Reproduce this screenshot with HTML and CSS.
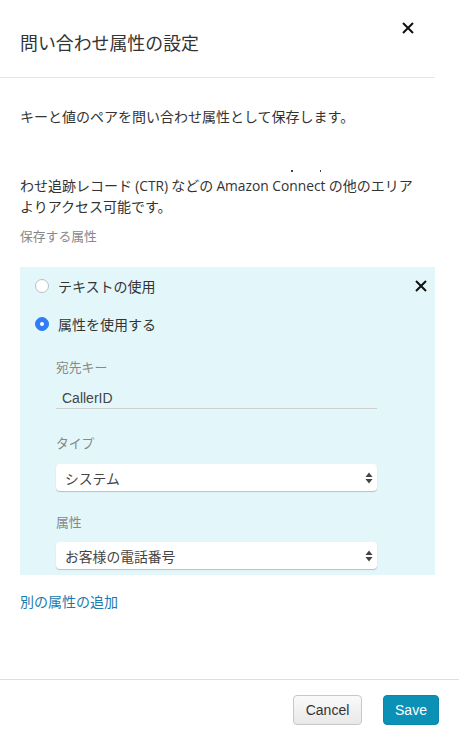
FILE: index.html
```html
<!DOCTYPE html>
<html lang="ja">
<head>
<meta charset="utf-8">
<title>問い合わせ属性の設定</title>
<link rel="stylesheet" href="styles.css">
</head>
<body>
<div class="modal">
  <header class="header">
    <h1 class="title">問い合わせ属性の設定</h1>
    <button class="close" aria-label="close">
      <svg width="12" height="12" viewBox="0 0 12 12"><path d="M1 1L11 11M11 1L1 11" stroke="#111" stroke-width="2" fill="none"/></svg>
    </button>
  </header>
  <div class="body">
    <p class="desc first">キーと値のペアを問い合わせ属性として保存します。</p>
    <p class="desc second"><span class="dots"><span class="dot"></span><span class="dot dot2"></span></span>わせ追跡レコード <span class="latin">(CTR)</span> などの <span class="latin">Amazon Connect</span> の他のエリア<br>よりアクセス可能です。</p>
    <div class="section-label">保存する属性</div>
    <div class="attr-box">
      <button class="close box-close" aria-label="remove">
        <svg width="12" height="12" viewBox="0 0 12 12"><path d="M1 1L11 11M11 1L1 11" stroke="#111" stroke-width="2" fill="none"/></svg>
      </button>
      <div class="radio-row"><span class="radio"></span><span>テキストの使用</span></div>
      <div class="radio-row second-radio"><span class="radio checked"></span><span>属性を使用する</span></div>
      <div class="fields">
        <div class="field-label key-label">宛先キー</div>
        <div class="text-input">CallerID</div>
        <div class="field-label type-label">タイプ</div>
        <div class="select"><span>システム</span>
          <svg width="8" height="12" viewBox="0 0 8 12"><path d="M4 0.5L7.5 5H0.5Z" fill="#444"/><path d="M4 11.5L7.5 7H0.5Z" fill="#444"/></svg>
        </div>
        <div class="field-label attr-label">属性</div>
        <div class="select attr-select"><span>お客様の電話番号</span>
          <svg width="8" height="12" viewBox="0 0 8 12"><path d="M4 0.5L7.5 5H0.5Z" fill="#444"/><path d="M4 11.5L7.5 7H0.5Z" fill="#444"/></svg>
        </div>
      </div>
    </div>
    <a class="add-link" href="#">別の属性の追加</a>
  </div>
  <footer class="footer">
    <button class="btn cancel">Cancel</button>
    <button class="btn save">Save</button>
  </footer>
</div>
</body>
</html>
```
FILE: styles.css
```css
* { box-sizing: border-box; }
html, body { margin: 0; padding: 0; background: #fff; }
body {
  font-family: "Noto Sans CJK JP", "Open Sans", sans-serif;
  color: #333;
  width: 459px;
  height: 745px;
  overflow: hidden;
}
.modal { width: 459px; }
.header {
  width: 435px;
  height: 78px;
  border-bottom: 1px solid #e6e6e6;
  display: flex;
  justify-content: space-between;
  align-items: flex-start;
}
.title {
  margin: 30px 0 0 20px;
  font-size: 17.9px;
  line-height: 24px;
  font-weight: normal;
  color: #333;
}
.close {
  background: none;
  border: 0;
  padding: 0;
  width: 12px;
  height: 12px;
  display: block;
  cursor: pointer;
}
.header .close { margin: 22px 21px 0 0; }
.body { padding: 0 20px; }
.desc {
  margin: 0;
  font-size: 14px;
  line-height: 21px;
  color: #333;
}
.desc.first { margin-top: 28px; }
.desc.second { margin-top: 27px; }
.latin { font-family: "Open Sans", "Noto Sans CJK JP", sans-serif; font-size: 13.8px; }
.dots { display: flex; height: 21px; align-items: flex-start; }
.dot { display: block; width: 1.5px; height: 1.5px; background: #444; margin: 16px 0 0 271px; }
.dot2 { margin-left: 27px; }
.section-label {
  margin-top: 9px;
  font-size: 12.8px;
  line-height: 20px;
  color: #888;
}
.attr-box {
  position: relative;
  margin-top: 21px;
  width: 415px;
  background: #e3f7fa;
  padding: 9px 0 6px 15px;
}
.box-close { position: absolute; top: 13px; right: 8px; }
.radio-row {
  display: flex;
  align-items: center;
  height: 20px;
  font-size: 14px;
  color: #333;
}
.second-radio { margin-top: 18px; }
.radio {
  width: 14px;
  height: 14px;
  border-radius: 50%;
  border: 1px solid #bdbdbd;
  background: #fff;
  margin-right: 9px;
  position: relative;
}
.radio.checked {
  background: #2f7ef5;
  border-color: #2f7ef5;
}
.radio.checked::after {
  content: "";
  position: absolute;
  left: 4px;
  top: 4px;
  width: 4px;
  height: 4px;
  border-radius: 50%;
  background: #fff;
}
.fields { padding-left: 21px; width: 342px; }
.field-label {
  font-size: 12.8px;
  line-height: 20px;
  color: #888;
}
.key-label { margin-top: 23px; }
.text-input {
  margin-top: 11px;
  height: 21px;
  border-bottom: 1px solid #cfcfcf;
  padding-left: 6px;
  font-family: "Liberation Sans", Arial, sans-serif;
  font-size: 14px;
  line-height: 20px;
  color: #444;
}
.type-label { margin-top: 24px; }
.select {
  margin-top: 11px;
  height: 27px;
  background: #fff;
  border-radius: 4px;
  box-shadow: 0 1px 1px rgba(0,0,0,0.22);
  display: flex;
  align-items: center;
  justify-content: space-between;
  padding: 0 4px 0 9px;
  font-size: 13.8px;
  color: #444;
}
.attr-label { margin-top: 21px; }
.attr-select { margin-top: 10px; }
.add-link {
  display: block;
  margin-top: 16px;
  font-size: 14px;
  line-height: 20px;
  color: #1b7aaa;
  text-decoration: none;
}
.footer {
  margin-top: 68px;
  border-top: 1px solid #dedede;
  padding: 15px 20px 0 0;
  display: flex;
  justify-content: flex-end;
  gap: 21px;
}
.btn {
  height: 30px;
  border-radius: 4px;
  font-family: "Liberation Sans", Arial, sans-serif;
  font-size: 14px;
  padding: 0;
  cursor: pointer;
}
.cancel {
  width: 69px;
  border: 1px solid #c8c8c8;
  background: linear-gradient(#fafafa, #e8e8e8);
  color: #333;
}
.save {
  width: 56px;
  border: 1px solid #0a88ab;
  background: #0a91b5;
  color: #fff;
}
```
